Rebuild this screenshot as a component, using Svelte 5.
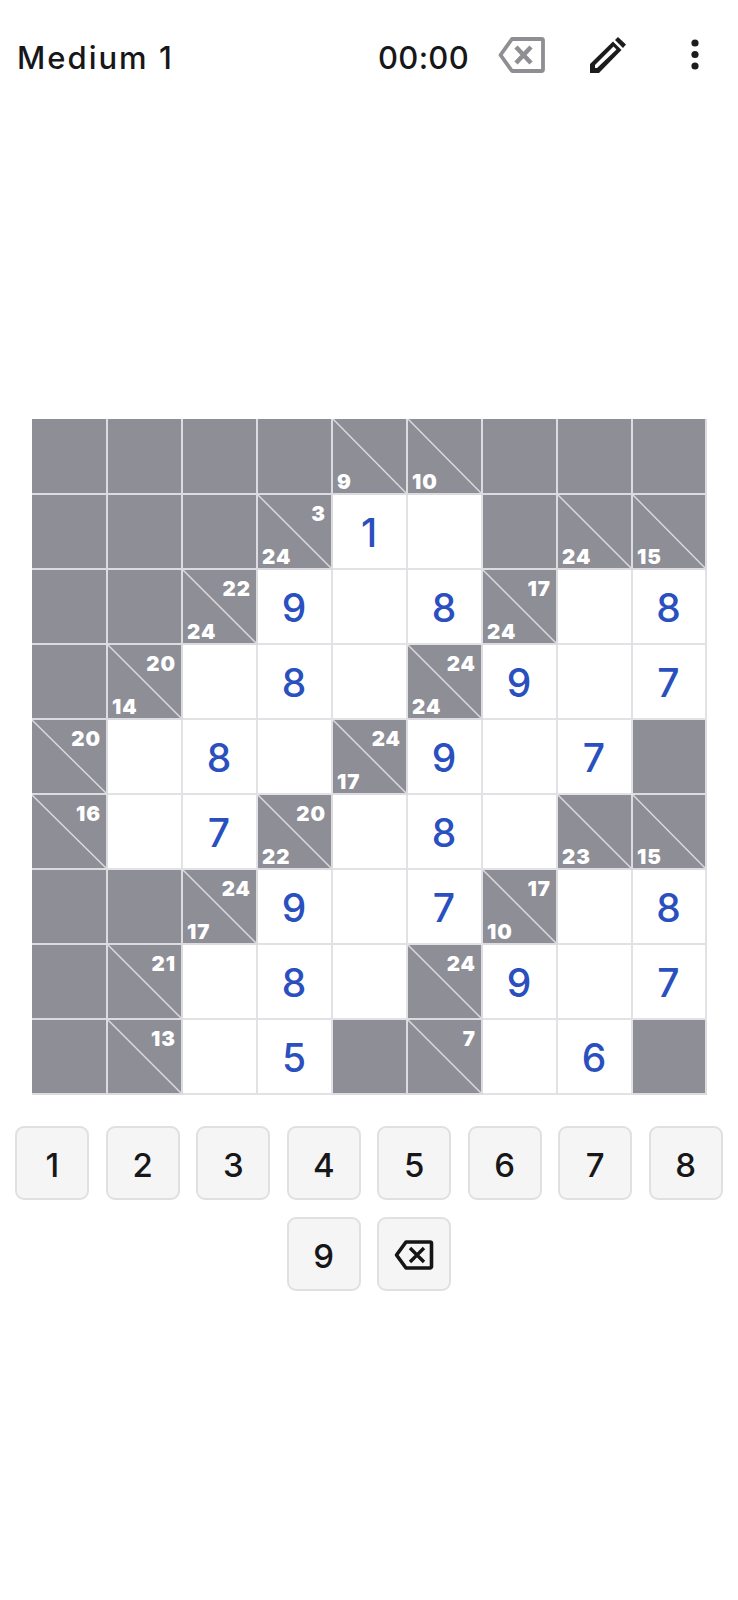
<script>
  const x = { k: 'x' };
  const _ = { k: 'e' };
  const n = (v) => ({ k: 'n', v });
  const c = (d, r) => ({ k: 'c', d, r });
  const rows = [
    [x, x, x, x, c(9), c(10), x, x, x],
    [x, x, x, c(24, 3), n(1), _, x, c(24), c(15)],
    [x, x, c(24, 22), n(9), _, n(8), c(24, 17), _, n(8)],
    [x, c(14, 20), _, n(8), _, c(24, 24), n(9), _, n(7)],
    [c(undefined, 20), _, n(8), _, c(17, 24), n(9), _, n(7), x],
    [c(undefined, 16), _, n(7), c(22, 20), _, n(8), _, c(23), c(15)],
    [x, x, c(17, 24), n(9), _, n(7), c(10, 17), _, n(8)],
    [x, c(undefined, 21), _, n(8), _, c(undefined, 24), n(9), _, n(7)],
    [x, c(undefined, 13), _, n(5), x, c(undefined, 7), _, n(6), x]
  ];
  const cells = rows.flat();
  const keys = [1, 2, 3, 4, 5, 6, 7, 8, 9];
</script>

<div class="page">
  <header class="bar">
    <h1 class="title">Medium 1</h1>
    <span class="timer">00:00</span>
    <svg class="erase" viewBox="0 0 47 36" aria-hidden="true">
      <path d="M14 2H43.5a1.5 1.5 0 0 1 1.5 1.500V32.500a1.500 1.500 0 0 1-1.500 1.500H14L2.500 18Z" fill="none" stroke="#8e8e93" stroke-width="3.800" stroke-linejoin="round"/>
      <path d="M18 10 33 26M33 10 18 26" stroke="#8e8e93" stroke-width="4.500" fill="none"/>
    </svg>
    <svg class="pencil" viewBox="0 0 36 36" aria-hidden="true">
      <path d="M0 36V27L23 4.500 31.500 13 9 36Z M5 31H7L26.500 12.500 23.500 9.500 5 28Z" fill="#1c1c1e" fill-rule="evenodd"/>
      <path d="M25 3 28 0 36 7.500 33 11Z" fill="#1c1c1e"/>
    </svg>
    <svg class="more" viewBox="0 0 8 32" aria-hidden="true">
      <circle cx="4" cy="4" r="3.600"/><circle cx="4" cy="15.500" r="3.600"/><circle cx="4" cy="27" r="3.600"/>
    </svg>
  </header>

  <div class="board">
    {#each cells as cell}
      <div class="cell" class:dark={cell.k === 'x' || cell.k === 'c'}>
        {#if cell.k === 'n'}
          <span class="val">{cell.v}</span>
        {:else if cell.k === 'c'}
          <svg class="diag" viewBox="0 0 100 100" preserveAspectRatio="none" aria-hidden="true">
            <line x1="0" y1="0" x2="100" y2="100" stroke="#dcdce0" stroke-width="1.900"/>
          </svg>
          {#if cell.r !== undefined}<span class="clue r">{cell.r}</span>{/if}
          {#if cell.d !== undefined}<span class="clue d">{cell.d}</span>{/if}
        {/if}
      </div>
    {/each}
  </div>

  <div class="pad">
    {#each keys as key}
      <button class="key">{key}</button>
    {/each}
    <button class="key" aria-label="Erase">
      <svg class="bs" viewBox="0 0 40 30" aria-hidden="true">
        <path d="M12 2H36a1.500 1.500 0 0 1 1.500 1.500V26.500A1.500 1.500 0 0 1 36 28H12L2.500 15Z" fill="none" stroke="#151517" stroke-width="3.600" stroke-linejoin="round"/>
        <path d="M16 8 30 22M30 8 16 22" stroke="#151517" stroke-width="3.400" fill="none"/>
      </svg>
    </button>
  </div>
</div>

<style>
  :global(body) {
    margin: 0;
    background: #fff;
  }
  .page {
    width: 738px;
    height: 1600px;
    font-family: Inter, "Open Sans", sans-serif;
    color: #17171a;
  }
  .bar {
    display: flex;
    align-items: center;
    height: 110px;
    padding: 0 39px 0 17px;
    box-sizing: border-box;
  }
  .title {
    flex: 1;
    margin: 0;
    padding-top: 4px;
    font-size: 31px;
    font-weight: 500;
    letter-spacing: 2px;
  }
  .timer {
    padding-top: 4px;
    font-size: 31px;
    font-weight: 500;
    letter-spacing: 0.3px;
    margin-right: 29px;
  }
  .erase {
    width: 47px;
    height: 36px;
    margin-right: 45px;
  }
  .pencil {
    width: 36px;
    height: 36px;
    margin-right: 65px;
  }
  .more {
    width: 8px;
    height: 32px;
    fill: #1c1c1e;
  }
  .board {
    display: grid;
    grid-template-columns: 76px repeat(7, 75px) 74px;
    grid-template-rows: 76px repeat(8, 75px);
    width: 675px;
    margin: 309px 0 0 32px;
  }
  .cell {
    position: relative;
    box-sizing: border-box;
    display: flex;
    align-items: center;
    justify-content: center;
    border-right: 2px solid #e2e2e6;
    border-bottom: 2px solid #e2e2e6;
    background: #fff;
  }
  .cell.dark {
    background: #8e8e96;
    border-color: #dcdce0;
  }
  .val {
    padding-top: 2px;
    margin-left: -1px;
    font-size: 39px;
    font-weight: 500;
    color: #2a4fbe;
  }
  .diag {
    position: absolute;
    inset: 0;
    width: 100%;
    height: 100%;
  }
  .clue {
    position: absolute;
    font-family: Inter, "Open Sans", sans-serif;
    font-size: 20.500px;
    font-weight: 900;
    line-height: 20px;
    color: #fff;
    letter-spacing: 1px;
  }
  .clue.r {
    top: 9px;
    right: 5px;
  }
  .clue.d {
    bottom: 1px;
    left: 4px;
  }
  .pad {
    display: flex;
    flex-wrap: wrap;
    justify-content: center;
    gap: 17px 16.500px;
    width: 738px;
    margin-top: 31px;
  }
  .key {
    display: flex;
    align-items: center;
    justify-content: center;
    box-sizing: border-box;
    width: 74px;
    height: 74px;
    padding: 3px 0 0;
    border: 2px solid #e0e0e0;
    border-radius: 9px;
    background: #f5f5f5;
    font-family: Inter, "Open Sans", sans-serif;
    font-size: 33px;
    font-weight: 500;
    color: #17171a;
  }
  .bs {
    width: 40px;
    height: 30px;
    margin-top: -1px;
  }
</style>
